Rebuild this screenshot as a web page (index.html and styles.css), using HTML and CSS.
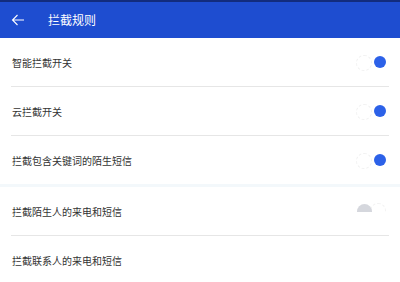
FILE: index.html
```html
<!DOCTYPE html>
<html lang="zh">
<head>
<meta charset="utf-8">
<link rel="stylesheet" href="styles.css">
</head>
<body>
<div class="app">
  <header class="bar">
    <svg class="back" width="14" height="12" viewBox="0 0 14 12"><path d="M13 6H1.5M6.5 1L1.5 6l5 5" fill="none" stroke="#fff" stroke-width="1.1"/></svg>
    <span class="title">拦截规则</span>
  </header>
  <section class="group">
    <div class="row"><span class="label">智能拦截开关</span><span class="toggle on"><i></i></span></div>
    <div class="row"><span class="label">云拦截开关</span><span class="toggle on"><i></i></span></div>
    <div class="row last"><span class="label">拦截包含关键词的陌生短信</span><span class="toggle on"><i></i></span></div>
  </section>
  <div class="band"></div>
  <section class="group">
    <div class="row"><span class="label">拦截陌生人的来电和短信</span><span class="toggle off"><i></i></span></div>
    <div class="row last"><span class="label">拦截联系人的来电和短信</span></div>
  </section>
</div>
</body>
</html>
```

FILE: styles.css
```css
* { box-sizing: border-box; }
html, body { margin: 0; padding: 0; background: #fff; }
body { font-family: "Noto Sans CJK SC", "Noto Sans", sans-serif; width: 400px; height: 282px; overflow: hidden; }
.bar {
  height: 38px;
  background: #1e4dd0;
  border-top: 2px solid #122c7e;
  display: flex;
  align-items: center;
  padding-left: 11px;
}
.back { display: block; margin-right: 23px; }
.title { color: #fff; font-size: 12px; line-height: 1; }
.group { padding: 0 11px; }
.row {
  height: 49px;
  display: flex;
  align-items: center;
  justify-content: space-between;
  border-bottom: 1px solid #e6e6e6;
}
.row.last { border-bottom: none; height: 48px; }
.label { font-size: 10px; color: #333; padding-left: 1px; }
.toggle {
  width: 32px;
  height: 14px;
  position: relative;
  margin-right: 3px;
}
.toggle::before {
  content: "";
  position: absolute;
  left: 2px; top: 0;
  width: 14px; height: 14px;
  border-radius: 50%;
  border: 1px dashed #f1f1f1;
}
.toggle i {
  position: absolute;
  top: 1px;
  width: 12px; height: 12px;
  border-radius: 50%;
}
.toggle.on i { right: 0; background: #2c61e8; }
.toggle.off { overflow: hidden; height: 10px; align-self: flex-start; margin-top: 15px; }
.toggle.off::before { left: auto; right: 0; top: 1px; border-color: #f2f2f2; }
.toggle.off i { left: 3px; top: 2px; width: 15px; height: 15px; background: #d5d7dd; }
.band { height: 3px; background: #f3f8fb; }
```
